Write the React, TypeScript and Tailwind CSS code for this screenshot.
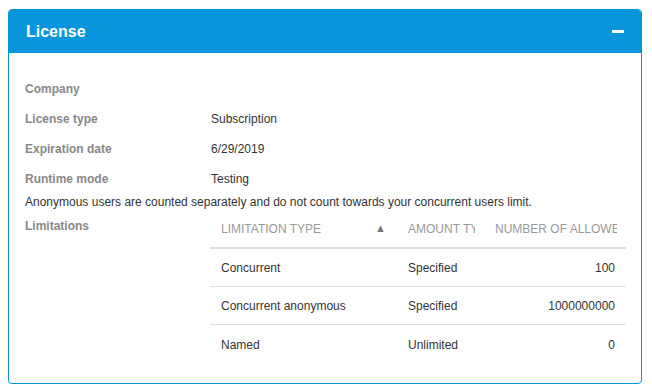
import React, { FC } from 'react';

interface Limitation {
  type: string;
  amount: string;
  allowed: string;
}

const details: { label: string; value: string }[] = [
  { label: 'Company', value: '' },
  { label: 'License type', value: 'Subscription' },
  { label: 'Expiration date', value: '6/29/2019' },
  { label: 'Runtime mode', value: 'Testing' }
];

const limitations: Limitation[] = [
  { type: 'Concurrent', amount: 'Specified', allowed: '100' },
  { type: 'Concurrent anonymous', amount: 'Specified', allowed: '1000000000' },
  { type: 'Named', amount: 'Unlimited', allowed: '0' }
];

const LimitationsTable: FC = () => (
  <div className="w-[416px] text-[12px]">
    {/* Column headers (narrow columns clip their titles, as in the grid) */}
    <div className="flex h-[39px] items-center border-b-2 border-[#dddddd] uppercase text-[#999999]">
      <div className="flex w-[187px] items-center justify-between px-[11px]">
        <span className="whitespace-nowrap">Limitation type</span>
        <span className="text-[11px] leading-none text-[#777777]">▲</span>
      </div>
      <div className="w-[88px] overflow-hidden whitespace-nowrap pl-[11px] pr-[10px]">
        <div className="overflow-hidden">Amount type</div>
      </div>
      <div className="w-[141px] overflow-hidden whitespace-nowrap pl-[10px] pr-[9px]">
        <div className="overflow-hidden">Number of allowed users</div>
      </div>
    </div>

    {/* Rows */}
    {limitations.map((row, i) => (
      <div
        key={row.type}
        className={
          i < limitations.length - 1
            ? 'flex h-[38px] items-center border-b border-[#dddddd] text-[#333333]'
            : 'flex h-[39px] items-center text-[#333333]'
        }
      >
        <div className="w-[187px] px-[11px] whitespace-nowrap">{row.type}</div>
        <div className="w-[88px] pl-[11px] whitespace-nowrap">{row.amount}</div>
        <div className="w-[141px] pr-[11px] text-right whitespace-nowrap">{row.allowed}</div>
      </div>
    ))}
  </div>
);

const App: FC = () => {
  return (
    <div
      className="min-h-screen bg-white pt-[9px] pl-[8px]"
      style={{ fontFamily: '"Liberation Sans", Arial, sans-serif' }}
    >
      <div className="w-[634px] overflow-hidden rounded-[4px] border border-[#0895db]">
        {/* Header */}
        <div className="flex h-[43px] items-center justify-between bg-[#0895db] pl-[17px] pr-[17px]">
          <span className="text-[16px] font-bold text-white">License</span>
          <span className="block h-[3px] w-[12px] bg-white" />
        </div>

        {/* Body */}
        <div className="pl-[16px] pr-[15px] pt-[21px] pb-[19px] text-[12px]">
          {details.map(d => (
            <div key={d.label} className="flex h-[30px] items-center">
              <div className="w-[186px] font-bold text-[#888888]">{d.label}</div>
              <div className="text-[#333333]">{d.value}</div>
            </div>
          ))}

          <div className="leading-4 text-[#333333]">
            Anonymous users are counted separately and do not count towards your concurrent users limit.
          </div>

          <div className="flex">
            <div className="w-[185px] pt-[8px] leading-4 font-bold text-[#888888]">Limitations</div>
            <LimitationsTable />
          </div>
        </div>
      </div>
    </div>
  );
};

export default App;
